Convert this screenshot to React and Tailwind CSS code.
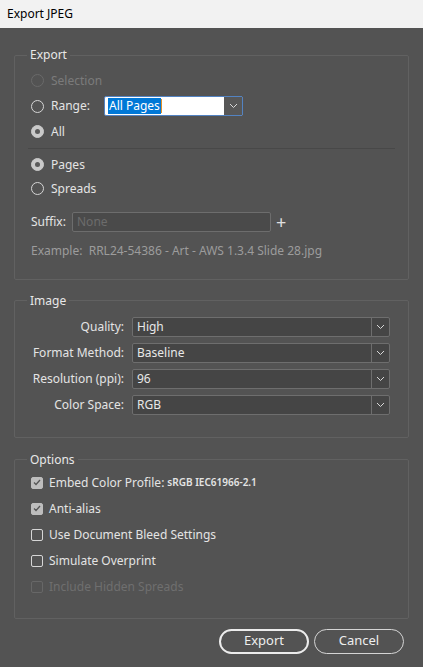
import { useState } from "react";

function Chevron({ className = "" }) {
  return (
    <svg width="9" height="6" viewBox="0 0 9 6" className={className}>
      <polyline points="1,1 4.5,4.5 8,1" fill="none" stroke="#d8d8d8" strokeWidth="1" />
    </svg>
  );
}

function Radio({ label, checked, disabled }) {
  return (
    <div className="flex h-[25.5px] items-center">
      <span
        className={`flex h-[13px] w-[13px] items-center justify-center rounded-full border ${
          disabled ? "border-[#6a6a6a]" : checked ? "border-[#c9c9c9] bg-[#c9c9c9]" : "border-[#d6d6d6]"
        }`}
      >
        {checked && <span className="h-[5px] w-[5px] rounded-full bg-[#5a5a5a]" />}
      </span>
      <span className={`ml-[7px] ${disabled ? "text-[#7b7b7b]" : "text-[#e4e4e4]"}`}>{label}</span>
    </div>
  );
}

function Check({ label, checked, disabled, extra }) {
  return (
    <div className="flex h-[26px] items-center">
      <span
        className={`flex h-[12px] w-[12px] items-center justify-center rounded-[2px] border ${
          disabled ? "border-[#676767]" : checked ? "border-[#bdbdbd] bg-[#bdbdbd]" : "border-[#d6d6d6]"
        }`}
      >
        {checked && (
          <svg width="8" height="7" viewBox="0 0 8 7">
            <polyline points="1,3.5 3,5.5 7,1" fill="none" stroke="#555" strokeWidth="1.3" />
          </svg>
        )}
      </span>
      <span className={`ml-[6px] ${disabled ? "text-[#6f6f6f]" : "text-[#e4e4e4]"}`}>{label}</span>
      {extra && <span className="ml-[3px] text-[10px] font-semibold text-[#e4e4e4]">{extra}</span>}
    </div>
  );
}

function Select({ label, value }) {
  return (
    <div className="flex h-[26px] items-center">
      <span className="w-[110px] pr-[1px] text-right text-[#e4e4e4]">{label}</span>
      <div className="ml-[7px] flex h-[20px] w-[258px] items-center rounded-[2px] border border-[#6e6e6e] bg-[#454545]">
        <span className="flex-1 pl-[4px] text-[#e8e8e8]">{value}</span>
        <span className="flex h-full w-[18px] items-center justify-center border-l border-[#6e6e6e]">
          <Chevron />
        </span>
      </div>
    </div>
  );
}

function Group({ title, className = "", children }) {
  return (
    <fieldset className={`mx-[14px] rounded-[2px] border border-[#616161] ${className}`}>
      <legend className="ml-[12px] px-[3px] leading-4 text-[#e8e8e8]">{title}</legend>
      {children}
    </fieldset>
  );
}

export default function App() {
  const [suffix, setSuffix] = useState("");

  return (
    <div className="h-[667px] w-[423px] overflow-hidden bg-[#535353] font-['Noto_Sans',sans-serif] text-[12px]">
      <div className="flex h-[28px] items-center bg-[#f2f2f2] pl-[7px] text-[12px] text-black">
        Export JPEG
      </div>

      {/* Export */}
      <Group title="Export" className="mt-[19px] pb-[20px]">
        <div className="px-[16px] pt-[5px]">
          <Radio label="Selection" disabled />
          <div className="flex h-[25.5px] items-center">
            <span className="flex h-[13px] w-[13px] rounded-full border border-[#d6d6d6]" />
            <span className="ml-[7px] w-[53px] text-[#e4e4e4]">Range:</span>
            <div className="flex h-[20px] w-[139px] items-center rounded-[2px] border border-[#5383c2] bg-white">
              <span className="flex flex-1 items-center pl-[3px]">
                <span className="bg-[#0078d7] px-[1px] leading-4 text-white">All Pages</span>
                <span className="h-[14px] w-[1px] bg-[#e0902a]" />
              </span>
              <span className="flex h-full w-[18px] items-center justify-center bg-[#575757]">
                <Chevron />
              </span>
            </div>
          </div>
          <Radio label="All" checked />
        </div>
        <div className="mx-[13px] mt-[3px] h-[1px] bg-[#484848]" />
        <div className="px-[16px] pt-[4px]">
          <div className="[&>div]:h-[24px]">
            <Radio label="Pages" checked />
            <Radio label="Spreads" />
          </div>
          <div className="mt-[11px] flex h-[20px] items-center">
            <span className="w-[41px] text-[#e4e4e4]">Suffix:</span>
            <input
              value={suffix}
              onChange={(e) => setSuffix(e.target.value)}
              placeholder="None"
              className="h-[20px] w-[199px] rounded-[2px] border border-[#6d6d6d] bg-[#4a4a4a] px-[4px] text-[#e4e4e4] outline-none placeholder:text-[#6c6c6c]"
            />
            <span className="ml-[5px] text-[18px] leading-none text-[#e0e0e0]">+</span>
          </div>
          <div className="mt-[11px] leading-4 text-[#9c9c9c]">
            Example:&nbsp; RRL24-54386 - Art - AWS 1.3.4 Slide 28.jpg
          </div>
        </div>
      </Group>

      {/* Image */}
      <Group title="Image" className="mt-[13px] pb-[19px]">
        <div className="pt-[5px]">
          <Select label="Quality:" value="High" />
          <Select label="Format Method:" value="Baseline" />
          <Select label="Resolution (ppi):" value="96" />
          <Select label="Color Space:" value="RGB" />
        </div>
      </Group>

      {/* Options */}
      <Group title="Options" className="mt-[14px] pb-[18px]">
        <div className="px-[16px] pt-[2px]">
          <Check label="Embed Color Profile:" checked extra="sRGB IEC61966-2.1" />
          <Check label="Anti-alias" checked />
          <Check label="Use Document Bleed Settings" />
          <Check label="Simulate Overprint" />
          <Check label="Include Hidden Spreads" disabled />
        </div>
      </Group>

      <div className="mt-[10px] flex justify-end gap-[5px] pr-[19px]">
        <button className="h-[25px] w-[90px] rounded-full border-2 border-[#ececec] text-[13px] text-[#eeeeee]">
          Export
        </button>
        <button className="h-[25px] w-[90px] rounded-full border border-[#d4d4d4] text-[13px] text-[#eeeeee]">
          Cancel
        </button>
      </div>
    </div>
  );
}
